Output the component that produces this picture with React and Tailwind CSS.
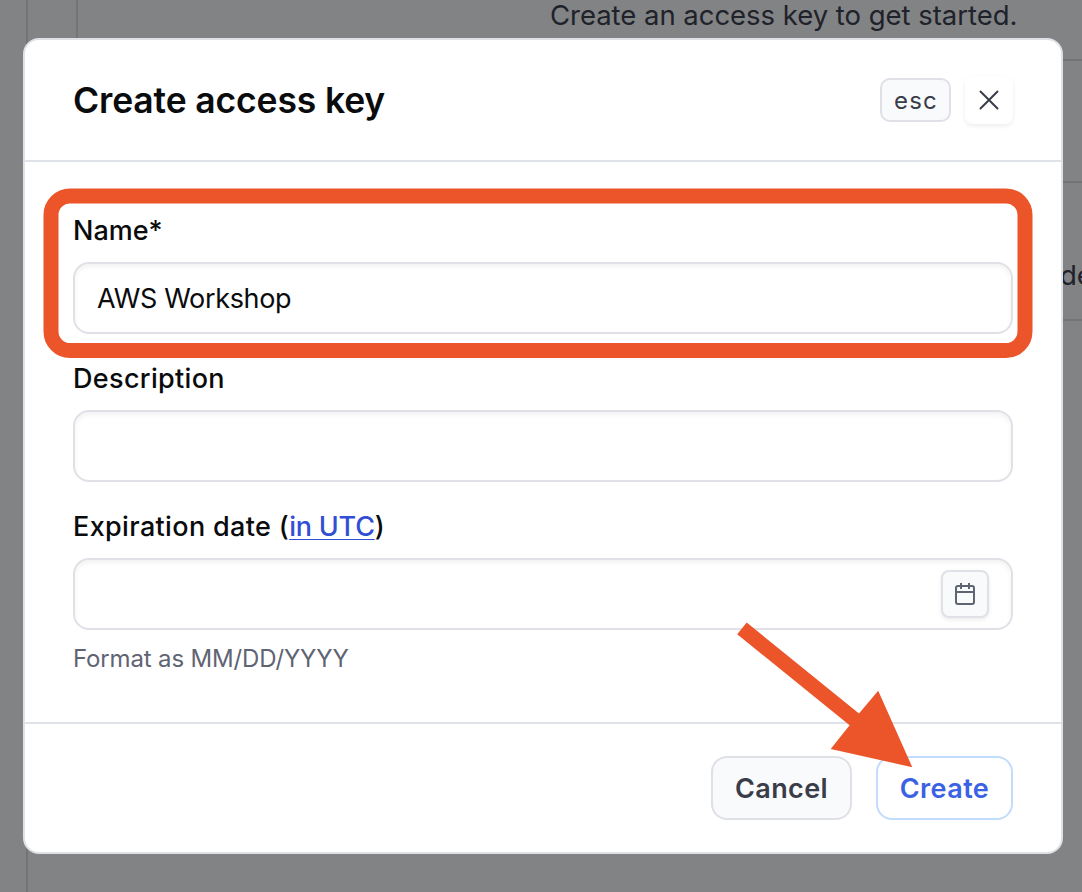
const inputBox =
  "flex h-[72px] w-full items-center rounded-[16px] border-2 border-[#dfe1e7] bg-white px-[22px] shadow-[inset_0_3px_5px_rgba(20,25,40,0.05)]";

function Label({ children }) {
  return (
    <label className="block h-9 pt-px text-[27px] leading-9 font-medium whitespace-nowrap text-[#0a0b0d]">
      {children}
    </label>
  );
}

function Backdrop() {
  return (
    <div className="flex h-full w-full pl-[26px]">
      <div className="flex min-w-0 flex-1 border-l-2 border-[#737477]">
        <div className="h-[120px] w-[50px] shrink-0 border-r-2 border-[#737477]" />
        <div className="flex flex-1 flex-col">
          <div className="h-[61px] border-b-2 border-[#737477] pl-[472px] text-[27.5px] leading-[30px] tracking-[-0.03px] whitespace-nowrap text-[#20222a]">
            Create an access key to get started.
          </div>
          <div className="h-[122px] border-b-2 border-[#737477]" />
          <div className="flex h-[138px] items-center justify-end border-b-2 border-[#737477] pt-[48px]">
            <span className="w-[22px] text-[27.5px] leading-[36px] text-[#20222a]">de</span>
          </div>
        </div>
      </div>
    </div>
  );
}

function CloseIcon() {
  return (
    <svg width="20" height="20" viewBox="0 0 20 20" fill="none" stroke="#393d49" strokeWidth="2" strokeLinecap="round">
      <path d="M1.5 1.5 18.5 18.5M18.5 1.5 1.5 18.5" />
    </svg>
  );
}

function CalendarIcon() {
  return (
    <svg width="20" height="22" viewBox="0 0 20 22" fill="none" stroke="#5f6473" strokeWidth="2">
      <rect x="1" y="3" width="18" height="18" rx="2" />
      <path d="M1 9H19M6 0V6M14 0V6" />
    </svg>
  );
}

export default function App() {
  return (
    <div className="relative h-[892px] w-[1082px] overflow-hidden bg-[#828385] font-['Inter',sans-serif]">
      <Backdrop />
      <div className="absolute top-[38px] left-[23px] flex h-[816px] w-[1040px] flex-col rounded-[16px] border-2 border-[#dfe1e7] bg-white">
        <header className="flex h-[122px] shrink-0 items-center border-b-2 border-[#dfe2e8] px-12">
          <h2 className="flex-1 pt-[2px] text-[35.5px] leading-[44px] font-semibold tracking-[-0.15px] whitespace-nowrap text-[#0a0b0d]">
            Create access key
          </h2>
          <kbd className="mr-[14px] flex h-11 w-[71px] items-center justify-center rounded-[10px] border-2 border-[#dfe1e7] bg-[#f9fafc] pt-px pl-px font-['Inter',sans-serif] text-[24px] tracking-[1.2px] text-[#393d49]">
            esc
          </kbd>
          <button className="flex size-12 items-center justify-center rounded-[8px] bg-white shadow-[0_2px_4px_rgba(20,25,40,0.08)]">
            <CloseIcon />
          </button>
        </header>

        <main className="flex flex-1 flex-col px-12 pt-[50px]">
          <Label>Name*</Label>
          <div className={inputBox + " mt-[14px]"}>
            <span className="pt-[2px] text-[27px] leading-9 tracking-[-0.35px] whitespace-nowrap text-[#0a0b0d]">AWS Workshop</span>
          </div>
          <div className="mt-[26px] tracking-[0.33px]">
            <Label>Description</Label>
          </div>
          <div className={inputBox + " mt-[14px]"} />
          <div className="mt-[26px] tracking-[0.35px]">
            <Label>
              Expiration date (
              <a className="tracking-[-0.2px] text-[#314fd3] underline decoration-1 underline-offset-[3px]">in UTC</a>)
            </Label>
          </div>
          <div className={inputBox + " mt-[14px] justify-end"}>
            <button className="flex size-12 items-center justify-center rounded-[8px] border-2 border-[#dfe1e7] bg-[#f9fafc] shadow-[0_2px_4px_rgba(20,25,40,0.08)]">
              <CalendarIcon />
            </button>
          </div>
          <p className="mt-[11px] text-[24px] leading-9 tracking-[-0.15px] whitespace-nowrap text-[#5f6473]">Format as MM/DD/YYYY</p>
        </main>

        <footer className="flex h-[130px] shrink-0 items-center justify-end gap-6 border-t-2 border-[#dfe2e8] px-12">
          <button className="flex h-16 w-[141px] items-center justify-center rounded-[16px] border-2 border-[#dfe1e7] bg-[#f9fafc] pt-[2px] text-[27px] font-semibold tracking-[0.4px] text-[#393d49]">
            Cancel
          </button>
          <button className="flex h-16 w-[137px] items-center justify-center rounded-[16px] border-2 border-[#c3dcfc] bg-white pt-[2px] text-[27px] font-semibold tracking-[0.4px] text-[#3b62e3]">
            Create
          </button>
        </footer>
      </div>

      <svg className="absolute top-[180px] left-[35px]" width="1006" height="186" viewBox="35 180 1006 186" fill="none" stroke="#ec5429" strokeWidth="15">
        <rect x="51" y="196" width="974" height="154.5" rx="19" />
      </svg>
      <svg className="absolute top-[615px] left-[730px]" width="190" height="160" viewBox="730 615 190 160" fill="#ec5429">
        <path d="M746.7 622.5 859 713.5 878.2 690.8 912.3 767.2 830.7 749 849.6 725.2 737.2 634.2Z" />
      </svg>
    </div>
  );
}
